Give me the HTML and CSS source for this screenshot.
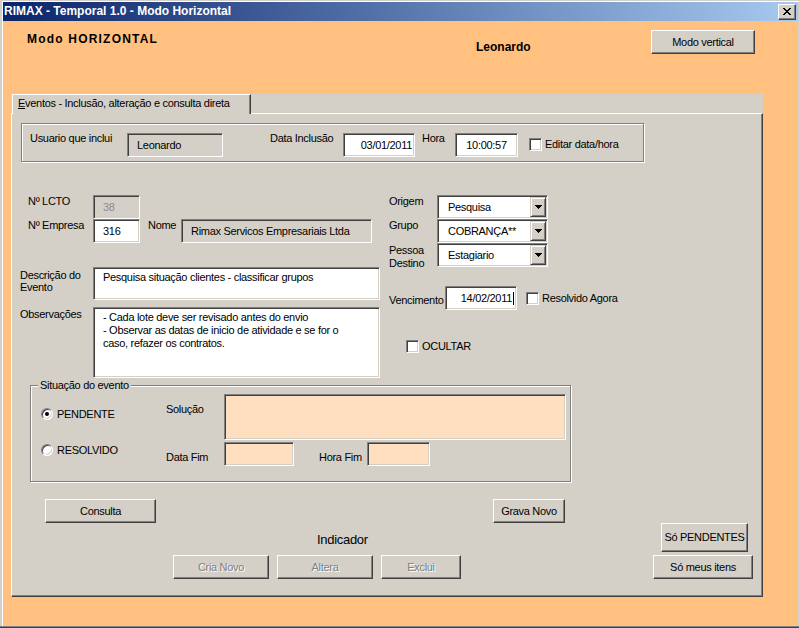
FILE: index.html
```html
<!DOCTYPE html>
<html lang="pt-BR">
<head>
<meta charset="utf-8">
<title>RIMAX - Temporal 1.0 - Modo Horizontal</title>
<link rel="stylesheet" href="styles.css">
</head>
<body>
<div class="window">
  <div class="titlebar">
    <span class="title-text">RIMAX - Temporal 1.0 - Modo Horizontal</span>
    <span class="close-btn">
      <svg class="close-x" width="8" height="7" viewBox="0 0 8 7" shape-rendering="crispEdges"><path d="M0 0h2v1H0zM6 0h2v1H6zM1 1h2v1H1zM5 1h2v1H5zM2 2h4v1H2zM3 3h2v1H3zM2 4h4v1H2zM1 5h2v1H1zM5 5h2v1H5zM0 6h2v1H0zM6 6h2v1H6z"/></svg>
    </span>
  </div>
  <div class="client">
    <div class="header">
      <div class="mode-title">Modo HORIZONTAL</div>
      <div class="user-name">Leonardo</div>
      <div class="btn btn-mode">Modo vertical</div>
    </div>
    <div class="tabctl">
      <div class="tabstrip">
        <div class="tab"><u>E</u>ventos - Inclusão, alteração e consulta direta</div>
      </div>
      <div class="page">
        <div class="info-box">
          <span class="lbl lbl-user">Usuario que inclui</span>
          <div class="tb ro tb-user">Leonardo</div>
          <span class="lbl lbl-datainc">Data Inclusão</span>
          <div class="tb right tb-datainc">03/01/2011</div>
          <span class="lbl lbl-hora">Hora</span>
          <div class="tb center tb-hora">10:00:57</div>
          <div class="check-item check-edit"><span class="chk"></span><span class="lbl">Editar data/hora</span></div>
        </div>

        <div class="fields">
          <div class="col-left">
            <div class="row row-num">
              <span class="lbl lbl-num">Nº LCTO</span>
              <div class="tb ro dis tb-num">38</div>
            </div>
            <div class="row row-num">
              <span class="lbl lbl-num">Nº Empresa</span>
              <div class="tb tb-num">316</div>
              <span class="lbl lbl-nome">Nome</span>
              <div class="tb ro tb-nome">Rimax Servicos Empresariais Ltda</div>
            </div>
            <div class="row row-desc">
              <span class="lbl lbl-desc">Descrição do<br>Evento</span>
              <div class="tb multi tb-desc">Pesquisa situação clientes - classificar grupos</div>
            </div>
            <div class="row row-obs">
              <span class="lbl lbl-obs">Observações</span>
              <div class="tb multi tb-obs">- Cada lote deve ser revisado antes do envio<br>- Observar as datas de inicio de atividade e se for o<br>caso, refazer os contratos.</div>
            </div>
          </div>
          <div class="col-right">
            <div class="row">
              <span class="lbl lbl-combo">Origem</span>
              <div class="combo"><span class="combo-text">Pesquisa</span><span class="combo-btn"><svg width="7" height="4" viewBox="0 0 7 4" shape-rendering="crispEdges"><path d="M0 0h7v1H0zM1 1h5v1H1zM2 2h3v1H2zM3 3h1v1H3z"/></svg></span></div>
            </div>
            <div class="row">
              <span class="lbl lbl-combo">Grupo</span>
              <div class="combo"><span class="combo-text">COBRANÇA**</span><span class="combo-btn"><svg width="7" height="4" viewBox="0 0 7 4" shape-rendering="crispEdges"><path d="M0 0h7v1H0zM1 1h5v1H1zM2 2h3v1H2zM3 3h1v1H3z"/></svg></span></div>
            </div>
            <div class="row">
              <span class="lbl lbl-combo lbl-pessoa">Pessoa<br>Destino</span>
              <div class="combo"><span class="combo-text">Estagiario</span><span class="combo-btn"><svg width="7" height="4" viewBox="0 0 7 4" shape-rendering="crispEdges"><path d="M0 0h7v1H0zM1 1h5v1H1zM2 2h3v1H2zM3 3h1v1H3z"/></svg></span></div>
            </div>
            <div class="row row-venc">
              <span class="lbl lbl-venc">Vencimento</span>
              <div class="tb right tb-venc">14/02/2011<span class="caret"></span></div>
              <div class="check-item check-resolvido"><span class="chk"></span><span class="lbl">Resolvido Agora</span></div>
            </div>
            <div class="row row-ocultar">
              <div class="check-item"><span class="chk"></span><span class="lbl">OCULTAR</span></div>
            </div>
          </div>
        </div>

        <div class="frame">
          <span class="frame-caption">Situação do evento</span>
          <div class="radios">
            <div class="radio-item"><span class="radio checked"></span><span class="lbl">PENDENTE</span></div>
            <div class="radio-item"><span class="radio"></span><span class="lbl">RESOLVIDO</span></div>
          </div>
          <div class="sol-area">
            <div class="row">
              <span class="lbl lbl-fim">Solução</span>
              <div class="tb peach tb-sol"></div>
            </div>
            <div class="row row-fim">
              <span class="lbl lbl-fim">Data Fim</span>
              <div class="tb peach tb-datafim"></div>
              <span class="lbl lbl-horafim">Hora Fim</span>
              <div class="tb peach tb-horafim"></div>
            </div>
          </div>
        </div>

        <div class="bottom">
          <div class="bottom-left">
            <div class="btn-row">
              <div class="btn btn-consulta">Consulta</div>
              <div class="btn btn-grava">Grava Novo</div>
            </div>
            <div class="indicador">Indicador</div>
            <div class="btn-row btn-row-actions">
              <div class="btn disabled btn-cria">Cria Novo</div>
              <div class="btn disabled btn-altera">Altera</div>
              <div class="btn disabled btn-exclui">Exclui</div>
            </div>
          </div>
          <div class="bottom-right">
            <div class="btn btn-pend">Só PENDENTES</div>
            <div class="btn btn-meus">Só meus itens</div>
          </div>
        </div>
      </div>
    </div>
  </div>
</div>
</body>
</html>
```

FILE: styles.css
```css
* { box-sizing: border-box; }
html, body { margin: 0; padding: 0; }
body {
  width: 799px; height: 628px; overflow: hidden;
  background: #d4d0c8;
  font-family: "Liberation Sans", Arial, sans-serif;
  font-size: 11px; line-height: 13px; color: #000;
  letter-spacing: -0.3px;
}

.window {
  width: 799px; height: 628px;
  display: flex; flex-direction: column;
  padding: 2px 1px 3px 3px;
  background: #d4d0c8;
  box-shadow: inset 0 -1px #404040, inset 0 -2px #808080,
              inset 2px 0 #d4d0c8, inset 0 1px #d4d0c8,
              inset 3px 0 #fff, inset 0 2px #fff;
}

.titlebar {
  flex: none; height: 19px;
  display: flex; align-items: center; justify-content: space-between;
  padding: 0 2px 0 1px;
  background: linear-gradient(to right, #0a246a, #a6caf0);
}
.title-text { color: #fff; font-weight: bold; font-size: 12px; letter-spacing: 0; white-space: nowrap; }
.close-btn {
  width: 18px; height: 16px;
  display: flex; align-items: center; justify-content: center;
  background: #d4d0c8;
  border: 1px solid; border-color: #fff #404040 #404040 #fff;
  box-shadow: inset -1px -1px #808080;
}
.close-x { display: block; fill: #000; }

.client { flex: 1; background: #ffc080; display: flex; flex-direction: column; }

.header { flex: none; height: 73px; display: flex; align-items: flex-start; padding: 9px 0 0 24px; }
.mode-title { width: 449px; margin-top: 2px; font-size: 12px; line-height: 14px; font-weight: bold; letter-spacing: 1.2px; white-space: nowrap; }
.user-name { width: 175px; margin-top: 10px; font-size: 12px; line-height: 14px; font-weight: bold; letter-spacing: 0; }
.btn-mode { width: 104px; height: 24px; }

/* generic controls */
.lbl { flex: none; white-space: nowrap; }
.btn {
  flex: none;
  display: flex; align-items: center; justify-content: center;
  background: #d4d0c8;
  border: 1px solid; border-color: #fff #404040 #404040 #fff;
  box-shadow: inset -1px -1px #808080;
  white-space: nowrap;
}
.btn.disabled { color: #808080; text-shadow: 1px 1px #fff; }

.tb {
  flex: none; height: 24px;
  display: flex; align-items: center;
  padding: 0 4px 0 9px;
  background: #fff;
  border: 1px solid; border-color: #808080 #fff #fff #808080;
  box-shadow: inset 1px 1px #404040, inset -1px -1px #d4d0c8;
  white-space: nowrap; overflow: hidden;
}
.tb.ro { background: #d4d0c8; }
.tb.dis { color: #8c8c8c; }
.tb.peach { background: #ffdfc0; }
.tb.right { justify-content: flex-end; padding: 0 2px 0 0; }
.tb.center { justify-content: center; padding: 0; }
.tb.multi { display: block; padding: 3px 4px 0 9px; }

.chk {
  flex: none; width: 13px; height: 13px;
  background: #fff;
  border: 1px solid; border-color: #808080 #fff #fff #808080;
  box-shadow: inset 1px 1px #404040, inset -1px -1px #d4d0c8;
}
.check-item { display: flex; align-items: center; gap: 3px; }

.radio {
  flex: none; width: 12px; height: 12px; border-radius: 50%;
  background: #fff;
  border: 1px solid; border-color: #808080 #fff #fff #808080;
  box-shadow: inset 1px 1px #404040, inset -1px -1px #d4d0c8;
  display: flex; align-items: center; justify-content: center;
}
.radio.checked::after { content: ""; width: 4px; height: 4px; border-radius: 50%; background: #000; }

.combo {
  flex: none; width: 111px; height: 24px;
  display: flex; padding: 1px;
  background: #fff;
  border: 1px solid; border-color: #808080 #fff #fff #808080;
  box-shadow: inset 1px 1px #404040, inset -1px -1px #d4d0c8;
}
.combo-text { flex: 1; display: flex; align-items: center; padding-left: 9px; white-space: nowrap; }
.combo-btn {
  width: 16px; flex: none;
  display: flex; align-items: center; justify-content: center;
  background: #d4d0c8;
  border: 1px solid; border-color: #d4d0c8 #404040 #404040 #d4d0c8;
  box-shadow: inset 1px 1px #fff, inset -1px -1px #808080;
}
.combo-btn svg { display: block; fill: #000; }

.caret { display: inline-block; width: 1px; height: 13px; background: #000; margin-left: 1px; }

/* tab control */
.tabctl { flex: none; margin-left: 8px; width: 752px; display: flex; flex-direction: column; }
.tabstrip { height: 19px; background: #d4d0c8; display: flex; padding-left: 1px; }
.tab {
  position: relative; z-index: 1;
  width: 239px; height: 20px;
  padding: 2px 0 0 5px;
  background: #d4d0c8;
  border: 1px solid; border-bottom: 0;
  border-color: #fff #404040 #d4d0c8 #fff;
  box-shadow: inset -1px 0 #808080;
  white-space: nowrap;
}
.page {
  height: 484px;
  background: #d4d0c8;
  border: 1px solid; border-color: #fff #404040 #404040 #fff;
  box-shadow: inset -1px -1px #808080;
  display: flex; flex-direction: column; align-items: flex-start;
}

/* info group */
.info-box {
  flex: none;
  margin: 9px 0 0 9px; width: 623px; height: 39px;
  display: flex; align-items: flex-start;
  padding: 8px 0 0 8px;
  border: 1px solid #808080;
  box-shadow: inset 1px 1px #fff, 1px 1px #fff;
}
.lbl-user { width: 97px; }
.tb-user { width: 96px; margin-top: 1px; }
.lbl-datainc { margin-left: 47px; width: 73px; }
.tb-datainc { width: 72px; margin-top: 1px; }
.lbl-hora { margin-left: 7px; width: 33px; }
.tb-hora { width: 63px; margin-top: 1px; }
.check-edit { margin: 6px 0 0 11px; }

/* fields */
.fields { display: flex; margin-top: 33px; }
.col-left { width: 377px; display: flex; flex-direction: column; }
.col-right { display: flex; flex-direction: column; }
.row { display: flex; align-items: flex-start; }
.row-num { padding-left: 16px; }
.lbl-num { width: 65px; }
.tb-num { width: 47px; }
.lbl-nome { margin-left: 8px; width: 33px; }
.tb-nome { width: 191px; }
.row-desc { margin-top: 24px; padding-left: 8px; }
.lbl-desc { width: 73px; margin-top: 2px; line-height: 12px; }
.tb-desc { width: 287px; height: 33px; }
.row-obs { margin-top: 7px; padding-left: 8px; }
.lbl-obs { width: 73px; margin-top: 1px; }
.tb-obs { width: 287px; height: 71px; padding-top: 4px; padding-left: 8px; }

.lbl-combo { width: 48px; }
.lbl-pessoa { margin-top: 1px; }
.row-venc { margin-top: 16px; }
.lbl-venc { width: 56px; margin-top: 8px; }
.tb-venc { width: 72px; }
.check-resolvido { margin: 6px 0 0 9px; }
.row-ocultar { margin-top: 30px; padding-left: 17px; }

/* frame */
.frame {
  flex: none; position: relative;
  margin: 7px 0 0 18px; width: 541px; height: 97px;
  display: flex;
  border: 1px solid #808080;
  box-shadow: inset 1px 1px #fff, 1px 1px #fff;
}
.frame-caption { position: absolute; left: 7px; top: -7px; padding: 0 2px; background: #d4d0c8; white-space: nowrap; }
.radios { margin-left: 10px; width: 125px; padding-top: 22px; display: flex; flex-direction: column; }
.radio-item { display: flex; align-items: center; height: 12px; gap: 4px; }
.radio-item + .radio-item { margin-top: 24px; }
.sol-area { padding-top: 8px; display: flex; flex-direction: column; }
.lbl-fim { width: 58px; margin-top: 9px; }
.tb-sol { width: 342px; height: 46px; }
.row-fim { margin-top: 2px; }
.tb-datafim { width: 70px; }
.lbl-horafim { margin-left: 25px; width: 48px; margin-top: 9px; }
.tb-horafim { width: 63px; }

/* bottom buttons */
.bottom { display: flex; margin-top: 17px; }
.bottom-left { width: 641px; display: flex; flex-direction: column; align-items: flex-start; }
.btn-row { display: flex; }
.btn-consulta { margin-left: 33px; width: 111px; height: 24px; }
.btn-grava { margin-left: 337px; width: 72px; height: 24px; }
.indicador { margin: 9px 0 0 305px; font-size: 13px; line-height: 15px; }
.btn-row-actions { margin-top: 8px; }
.btn-cria { margin-left: 161px; width: 96px; height: 24px; }
.btn-altera { margin-left: 8px; width: 96px; height: 24px; }
.btn-exclui { margin-left: 8px; width: 80px; height: 24px; }
.bottom-right { display: flex; flex-direction: column; align-items: flex-start; }
.btn-pend { margin: 24px 0 0 8px; width: 87px; height: 29px; }
.btn-meus { margin-top: 3px; width: 100px; height: 24px; }
```
